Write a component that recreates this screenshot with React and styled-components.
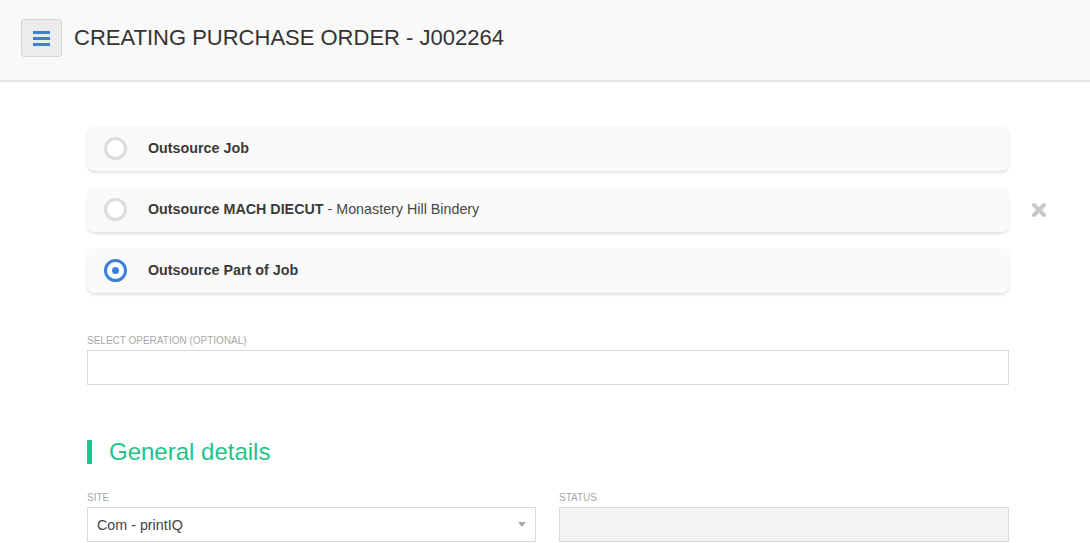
import React from 'react';
import styled, { createGlobalStyle } from 'styled-components';

const GlobalStyle = createGlobalStyle`
  html, body {
    margin: 0;
    padding: 0;
    background: #fff;
    font-family: "Liberation Sans", Arial, sans-serif;
    color: #333;
  }
  * { box-sizing: border-box; }
`;

const options = [
  { id: 'job', label: <b>Outsource Job</b> },
  {
    id: 'mach',
    label: (
      <>
        <b>Outsource MACH DIECUT</b> - Monastery Hill Bindery
      </>
    ),
    removable: true,
  },
  { id: 'part', label: <b>Outsource Part of Job</b>, checked: true },
];

const App = () => {
  return (
    <>
      <GlobalStyle />
      <Header>
        <MenuButton aria-label="menu">
          <span />
          <span />
          <span />
        </MenuButton>
        <Title>CREATING PURCHASE ORDER - J002264</Title>
      </Header>
      <Main>
        <OptionList>
          {options.map((o) => (
            <OptionRow key={o.id}>
              <OptionCard>
                <Radio checked={o.checked} />
                <OptionText>{o.label}</OptionText>
              </OptionCard>
              <RemoveSlot>
                {o.removable && (
                  <svg width="16" height="16" viewBox="0 0 16 16">
                    <path
                      d="M3 3 L13 13 M13 3 L3 13"
                      stroke="#c8c8c8"
                      strokeWidth="4"
                      strokeLinecap="round"
                    />
                  </svg>
                )}
              </RemoveSlot>
            </OptionRow>
          ))}
        </OptionList>

        <Field>
          <Label>Select operation (optional)</Label>
          <Input />
        </Field>

        <SectionTitle>General details</SectionTitle>

        <TwoCols>
          <Field>
            <Label>Site</Label>
            <Select>
              <span>Com - printIQ</span>
              <Caret />
            </Select>
          </Field>
          <Field>
            <Label>Status</Label>
            <Input disabled />
          </Field>
        </TwoCols>
      </Main>
    </>
  );
};

export default App;

const Header = styled.div`
  height: 82px;
  background: #f9f9f9;
  border-bottom: 2px solid #e3e3e3;
  display: flex;
  align-items: center;
  padding: 0 0 4px 21px;
`;

const MenuButton = styled.div`
  width: 41px;
  height: 38px;
  background: #ececec;
  border: 1px solid #d6d6d6;
  border-radius: 3px;
  display: flex;
  flex-direction: column;
  justify-content: center;
  align-items: center;
  gap: 3px;

  span {
    display: block;
    width: 17px;
    height: 3px;
    background: #3d7fdb;
  }
`;

const Title = styled.h1`
  margin: 0 0 0 12px;
  font-size: 22px;
  font-weight: normal;
  color: #333;
`;

const Main = styled.div`
  padding: 44px 0 0 87px;
`;

const OptionList = styled.div`
  display: flex;
  flex-direction: column;
  gap: 16px;
  margin-bottom: 40px;
`;

const OptionRow = styled.div`
  display: flex;
  align-items: center;
`;

const OptionCard = styled.div`
  width: 922px;
  height: 45px;
  background: #fafafa;
  border-radius: 8px;
  box-shadow: 0 2px 3px rgba(0, 0, 0, 0.12);
  display: flex;
  align-items: center;
  padding-left: 17px;
`;

const Radio = styled.span`
  width: 23px;
  height: 23px;
  border-radius: 50%;
  border: 3px solid ${(p) => (p.checked ? '#3d7fdb' : '#dcdcdc')};
  background: #fff;
  position: relative;
  flex-shrink: 0;

  &:after {
    content: '';
    display: ${(p) => (p.checked ? 'block' : 'none')};
    position: absolute;
    left: 50%;
    top: 50%;
    width: 7px;
    height: 7px;
    margin: -3.5px 0 0 -3.5px;
    border-radius: 50%;
    background: #3d7fdb;
  }
`;

const OptionText = styled.div`
  margin-left: 21px;
  margin-top: -2px;
  font-size: 14.3px;
  color: #474747;

  b {
    font-weight: bold;
    color: #3a3a3a;
  }
`;

const RemoveSlot = styled.div`
  width: 60px;
  display: flex;
  justify-content: center;
`;

const Field = styled.div`
  width: 922px;
  display: flex;
  flex-direction: column;
`;

const Label = styled.label`
  font-size: 10px;
  text-transform: uppercase;
  color: #a8a8a8;
  padding-top: 2px;
  margin-bottom: 3px;
  line-height: 12px;
`;

const Input = styled.div`
  height: 35px;
  border: 1px solid #dadada;
  background: ${(p) => (p.disabled ? '#f3f3f3' : '#fff')};
`;

const SectionTitle = styled.h2`
  margin: 55px 0 0 0;
  height: 24px;
  line-height: 24px;
  border-left: 5px solid #1ec48b;
  padding-left: 17px;
  font-size: 24px;
  font-weight: normal;
  color: #1ec48b;
`;

const TwoCols = styled.div`
  width: 922px;
  display: grid;
  grid-template-columns: 449px 450px;
  column-gap: 23px;
  margin-top: 26px;

  ${Field} {
    width: auto;
  }
`;

const Select = styled.div`
  height: 35px;
  border: 1px solid #dadada;
  background: #fff;
  display: flex;
  align-items: center;
  justify-content: space-between;
  padding: 0 9px 0 9px;
  font-size: 14.3px;
  color: #444;
`;

const Caret = styled.span`
  width: 0;
  height: 0;
  border-left: 4px solid transparent;
  border-right: 4px solid transparent;
  border-top: 5px solid #aaa;
`;
